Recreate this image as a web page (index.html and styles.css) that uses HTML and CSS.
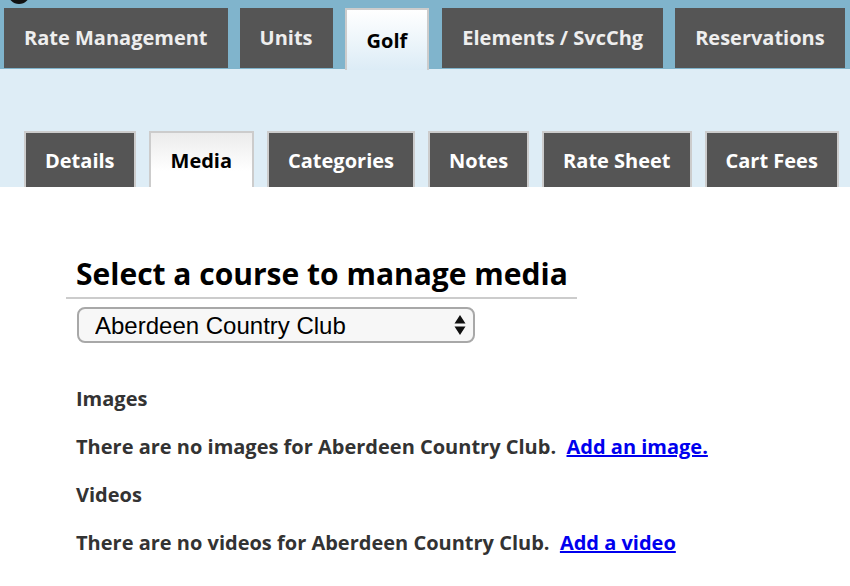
FILE: index.html
```html
<!DOCTYPE html>
<html>
<head>
<meta charset="utf-8">
<link rel="stylesheet" href="styles.css">
</head>
<body>
<div class="logo-bit"></div>
<nav class="main-tabs">
  <a class="tab">Rate Management</a>
  <a class="tab">Units</a>
  <a class="tab active">Golf</a>
  <a class="tab">Elements / SvcChg</a>
  <a class="tab">Reservations</a>
</nav>
<nav class="sub-tabs">
  <a class="stab">Details</a>
  <a class="stab active">Media</a>
  <a class="stab">Categories</a>
  <a class="stab">Notes</a>
  <a class="stab">Rate Sheet</a>
  <a class="stab">Cart Fees</a>
</nav>
<main class="content">
  <h1 class="title">Select a course to manage media</h1>
  <div class="select-wrap">
    <select class="course">
      <option>Aberdeen Country Club</option>
    </select>
    <svg class="arrows" width="12" height="22" viewBox="0 0 12 22"><path d="M6 1 L11.5 9.5 H0.5 Z M6 21 L11.5 12.5 H0.5 Z" fill="#111"/></svg>
  </div>
  <h2 class="section first">Images</h2>
  <p class="line">There are no images for Aberdeen Country Club.&nbsp; <a href="#">Add an image.</a></p>
  <h2 class="section">Videos</h2>
  <p class="line">There are no videos for Aberdeen Country Club.&nbsp; <a href="#">Add a video</a></p>
</main>
</body>
</html>
```

FILE: styles.css
```css
html, body {
  margin: 0;
  padding: 0;
  background: #fff;
  font-family: "Open Sans", Lato, sans-serif;
}
body { position: relative; }
.logo-bit {
  position: absolute;
  left: 8px;
  top: -8px;
  width: 22px;
  height: 12px;
  border-radius: 0 0 12px 12px;
  background: #111;
}
.main-tabs {
  display: flex;
  gap: 12px;
  background: #80b4cc;
  height: 69px;
  padding: 8px 0 0 4px;
  box-sizing: border-box;
  align-items: flex-start;
}
.tab {
  height: 60px;
  display: flex;
  align-items: center;
  justify-content: center;
  background: #555555;
  color: #eeeeee;
  font-weight: bold;
  font-size: 20px;
  padding: 0 20px 2px;
  box-sizing: border-box;
}
.tab.active {
  height: 62px;
  border: 2px solid #cccccc;
  border-bottom: none;
  background: linear-gradient(#ffffff, #dcecf6);
  color: #000;
  padding: 0 20px;
  margin-right: 1px;
}
.sub-tabs {
  display: flex;
  gap: 13px;
  background: #deedf6;
  height: 118px;
  padding: 62px 0 0 24px;
  box-sizing: border-box;
  align-items: flex-end;
}
.stab {
  height: 56px;
  box-sizing: border-box;
  display: flex;
  align-items: center;
  justify-content: center;
  background: #555555;
  border: 2px solid #cccccc;
  border-bottom: none;
  color: #ffffff;
  font-weight: bold;
  font-size: 20px;
  padding: 0 19px;
}
.stab.active {
  background: linear-gradient(#ececec, #ffffff 70%);
  color: #000;
  padding: 0 20px;
}
.content {
  padding: 66px 0 0 66px;
  color: #333;
}
.title {
  margin: 0;
  width: 511px;
  box-sizing: border-box;
  padding: 0 0 2px 10px;
  font-size: 30px;
  line-height: 42px;
  color: #000;
  border-bottom: 2px solid #cccccc;
}
.select-wrap {
  position: relative;
  width: 398px;
  margin: 8px 0 0 11px;
}
.course {
  display: block;
  width: 398px;
  height: 36px;
  font-family: "Liberation Sans", Arial, sans-serif;
  font-size: 24px;
  color: #000;
  border: 2px solid #a8a8a8;
  border-radius: 8px;
  background: #f7f7f7;
  padding: 0 16px;
  appearance: none;
  -webkit-appearance: none;
}
.arrows {
  position: absolute;
  right: 9px;
  top: 7px;
  pointer-events: none;
}
.section {
  margin: 22px 0 0 10px;
  font-size: 20px;
  line-height: 26px;
}
.section.first { margin-top: 43px; }
.line {
  margin: 22px 0 0 10px;
  font-size: 20px;
  font-weight: bold;
  line-height: 26px;
}
.line a { color: #0000ee; text-decoration: underline; }
```
